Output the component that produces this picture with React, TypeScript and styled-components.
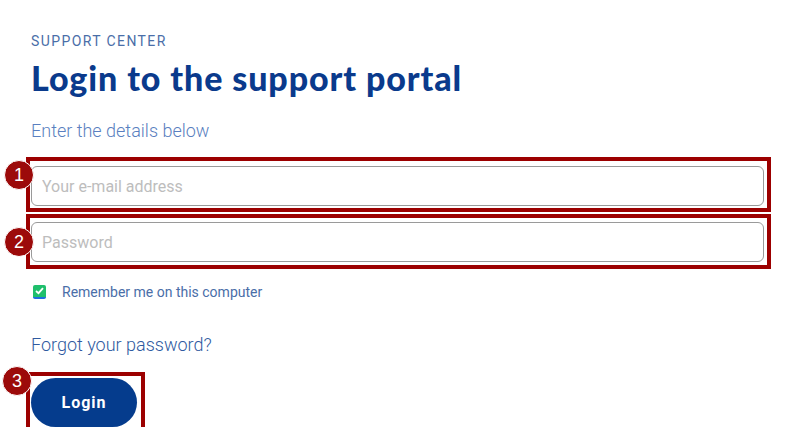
import React from 'react';
import styled, { createGlobalStyle } from 'styled-components';

const GlobalStyle = createGlobalStyle`
  body {
    margin: 0;
    background: #ffffff;
    font-family: Roboto, "Liberation Sans", sans-serif;
  }
`;

const Page = styled.div`
  display: flex;
  flex-direction: column;
  align-items: flex-start;
  padding: 33px 0 0 31px;
  width: 733px;
`;

const Eyebrow = styled.div`
  font-size: 14px;
  line-height: 16px;
  letter-spacing: 1.4px;
  color: #4a6ea8;
`;

const Title = styled.h1`
  margin: 9px 0 0;
  font-family: Lato, "Noto Sans", sans-serif;
  font-weight: 900;
  font-size: 34px;
  line-height: 40px;
  letter-spacing: 0.9px;
  color: #0a3a8c;
`;

const Subtitle = styled.p`
  margin: 22px 0 0;
  font-size: 18px;
  font-weight: 300;
  line-height: 22px;
  color: #5a7fc0;
`;

const Fields = styled.div`
  align-self: stretch;
  display: flex;
  flex-direction: column;
  gap: 16px;
  margin-top: 24px;
`;

const Annotated = styled.div`
  position: relative;
`;

const Marker = styled.div<{ $top: number; $right: number; $bottom: number; $left: number }>`
  position: absolute;
  top: ${p => -p.$top}px;
  right: ${p => -p.$right}px;
  bottom: ${p => -p.$bottom}px;
  left: ${p => -p.$left}px;
  border: 4px solid #9c0000;
  pointer-events: none;
`;

const Badge = styled.div<{ $x: number; $y: number }>`
  position: absolute;
  left: ${p => p.$x}px;
  top: ${p => p.$y}px;
  width: 28px;
  height: 28px;
  border-radius: 50%;
  background: #9c0a0a;
  border: 1px solid #ffffff;
  color: #ffffff;
  font-family: "Liberation Sans", Arial, sans-serif;
  font-size: 18px;
  line-height: 28px;
  text-align: center;
`;

const Input = styled.input`
  display: block;
  box-sizing: border-box;
  width: 100%;
  height: 40px;
  padding: 0 10px;
  border: 1px solid #9a9a9a;
  border-radius: 6px;
  font-family: Roboto, "Liberation Sans", sans-serif;
  font-size: 16px;
  color: #333;
  outline: none;

  &::placeholder {
    color: #bdbdbd;
  }
`;

const CheckRow = styled.label`
  display: flex;
  align-items: center;
  gap: 16px;
  margin-top: 22px;
  margin-left: 2px;
  font-size: 14px;
  color: #4a6ea8;
`;

const CheckBox = styled.span`
  display: inline-flex;
  align-items: center;
  justify-content: center;
  box-sizing: border-box;
  width: 13px;
  height: 14px;
  border-radius: 2px;
  background: #1fbf6c;
  border-bottom: 2px solid #1f6fe0;
`;

const ForgotLink = styled.a`
  display: block;
  margin-top: 34px;
  font-size: 18px;
  font-weight: 300;
  line-height: 22px;
  color: #2f5aa0;
  text-decoration: none;
`;

const ButtonWrap = styled.div`
  margin-top: 22px;
`;

const LoginButton = styled.button`
  display: block;
  width: 106px;
  height: 49px;
  border: none;
  border-radius: 25px;
  background: #053c8d;
  color: #ffffff;
  font-family: Roboto, "Liberation Sans", sans-serif;
  font-weight: 700;
  font-size: 16px;
  letter-spacing: 1px;
  cursor: pointer;
`;

export default function App() {
  return (
    <>
      <GlobalStyle />
      <Page>
        <Eyebrow>SUPPORT CENTER</Eyebrow>
        <Title>Login to the support portal</Title>
        <Subtitle>Enter the details below</Subtitle>
        <Fields>
          <Annotated>
            <Input type="email" placeholder="Your e-mail address" />
            <Marker $top={9} $right={7} $bottom={6} $left={5} />
            <Badge $x={-27} $y={-6}>1</Badge>
          </Annotated>
          <Annotated>
            <Input type="password" placeholder="Password" />
            <Marker $top={8} $right={7} $bottom={7} $left={5} />
            <Badge $x={-27} $y={5}>2</Badge>
          </Annotated>
        </Fields>
        <CheckRow>
          <CheckBox>
            <svg width="9" height="8" viewBox="0 0 9 8">
              <path d="M1 4 L3.5 6.2 L8 1.2" fill="none" stroke="#fff" strokeWidth="1.8" />
            </svg>
          </CheckBox>
          Remember me on this computer
        </CheckRow>
        <ForgotLink href="#">Forgot your password?</ForgotLink>
        <ButtonWrap>
          <Annotated>
            <LoginButton type="button">Login</LoginButton>
            <Marker $top={6} $right={8} $bottom={5} $left={5} />
            <Badge $x={-29} $y={-12}>3</Badge>
          </Annotated>
        </ButtonWrap>
      </Page>
    </>
  );
}
